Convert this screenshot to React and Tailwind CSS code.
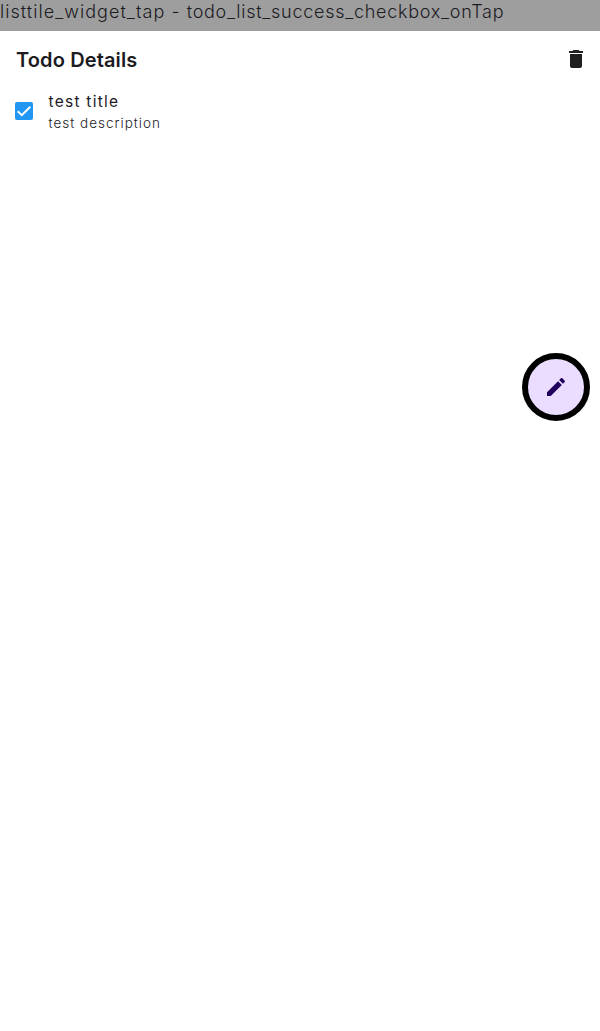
function DeleteIcon() {
  return (
    <svg viewBox="0 0 24 24" className="size-6 fill-[#1f1f1f]">
      <path d="M6 19c0 1.1.9 2 2 2h8c1.1 0 2-.9 2-2V7H6v12zM19 4h-3.5l-1-1h-5l-1 1H5v2h14V4z" />
    </svg>
  );
}

function EditIcon() {
  return (
    <svg viewBox="0 0 24 24" className="size-6 fill-[#21005d]">
      <path d="M3 17.25V21h3.75L17.81 9.94l-3.75-3.75L3 17.25zM20.71 7.04c.39-.39.39-1.02 0-1.41l-2.34-2.34c-.39-.39-1.02-.39-1.41 0l-1.83 1.83 3.75 3.75 1.83-1.83z" />
    </svg>
  );
}

function Checkbox() {
  return (
    <span role="checkbox" aria-checked="true" className="flex size-[18px] rounded-[2px] bg-[#2196f3]">
      <svg viewBox="0 0 18 18" className="size-[18px] fill-none stroke-white stroke-2">
        <path d="M2.7 9.2 6.8 13.2 15.3 4.8" />
      </svg>
    </span>
  );
}

export default function App() {
  return (
    <div className="flex h-[1031px] w-[600px] flex-col overflow-hidden bg-white font-['Inter','Noto_Sans',sans-serif] text-[#1c1b1f]">
      <div className="h-[31px] shrink-0 bg-[#9e9e9e]">
        <p className="w-max text-[18px] leading-[23px] font-light tracking-[0.72px] whitespace-nowrap">
          <span className="tracking-[1.04px]">listtile_widget_tap - </span>
          todo_list_success_checkbox_onTap
        </p>
      </div>
      <header className="flex h-14 shrink-0 items-center justify-between pr-3 pl-4">
        <h1 className="pt-px text-xl leading-6 font-semibold tracking-[0.13px] whitespace-nowrap">Todo Details</h1>
        <button type="button" aria-label="Delete">
          <DeleteIcon />
        </button>
      </header>
      <div className="flex gap-[15.5px] pt-1 pl-[15px]">
        <div className="pt-[11px]">
          <Checkbox />
        </div>
        <div className="whitespace-nowrap">
          <p className="w-max text-[15.5px] leading-[22px] tracking-[1.25px]">test title</p>
          <p className="w-max text-[13.5px] leading-[21px] font-light tracking-[1px]">test description</p>
        </div>
      </div>
      <button
        type="button"
        aria-label="Edit"
        className="mt-[219px] mr-2.5 flex size-[68px] shrink-0 items-center justify-center self-end rounded-full border-[6px] border-black bg-[#eaddff]"
      >
        <EditIcon />
      </button>
    </div>
  );
}
